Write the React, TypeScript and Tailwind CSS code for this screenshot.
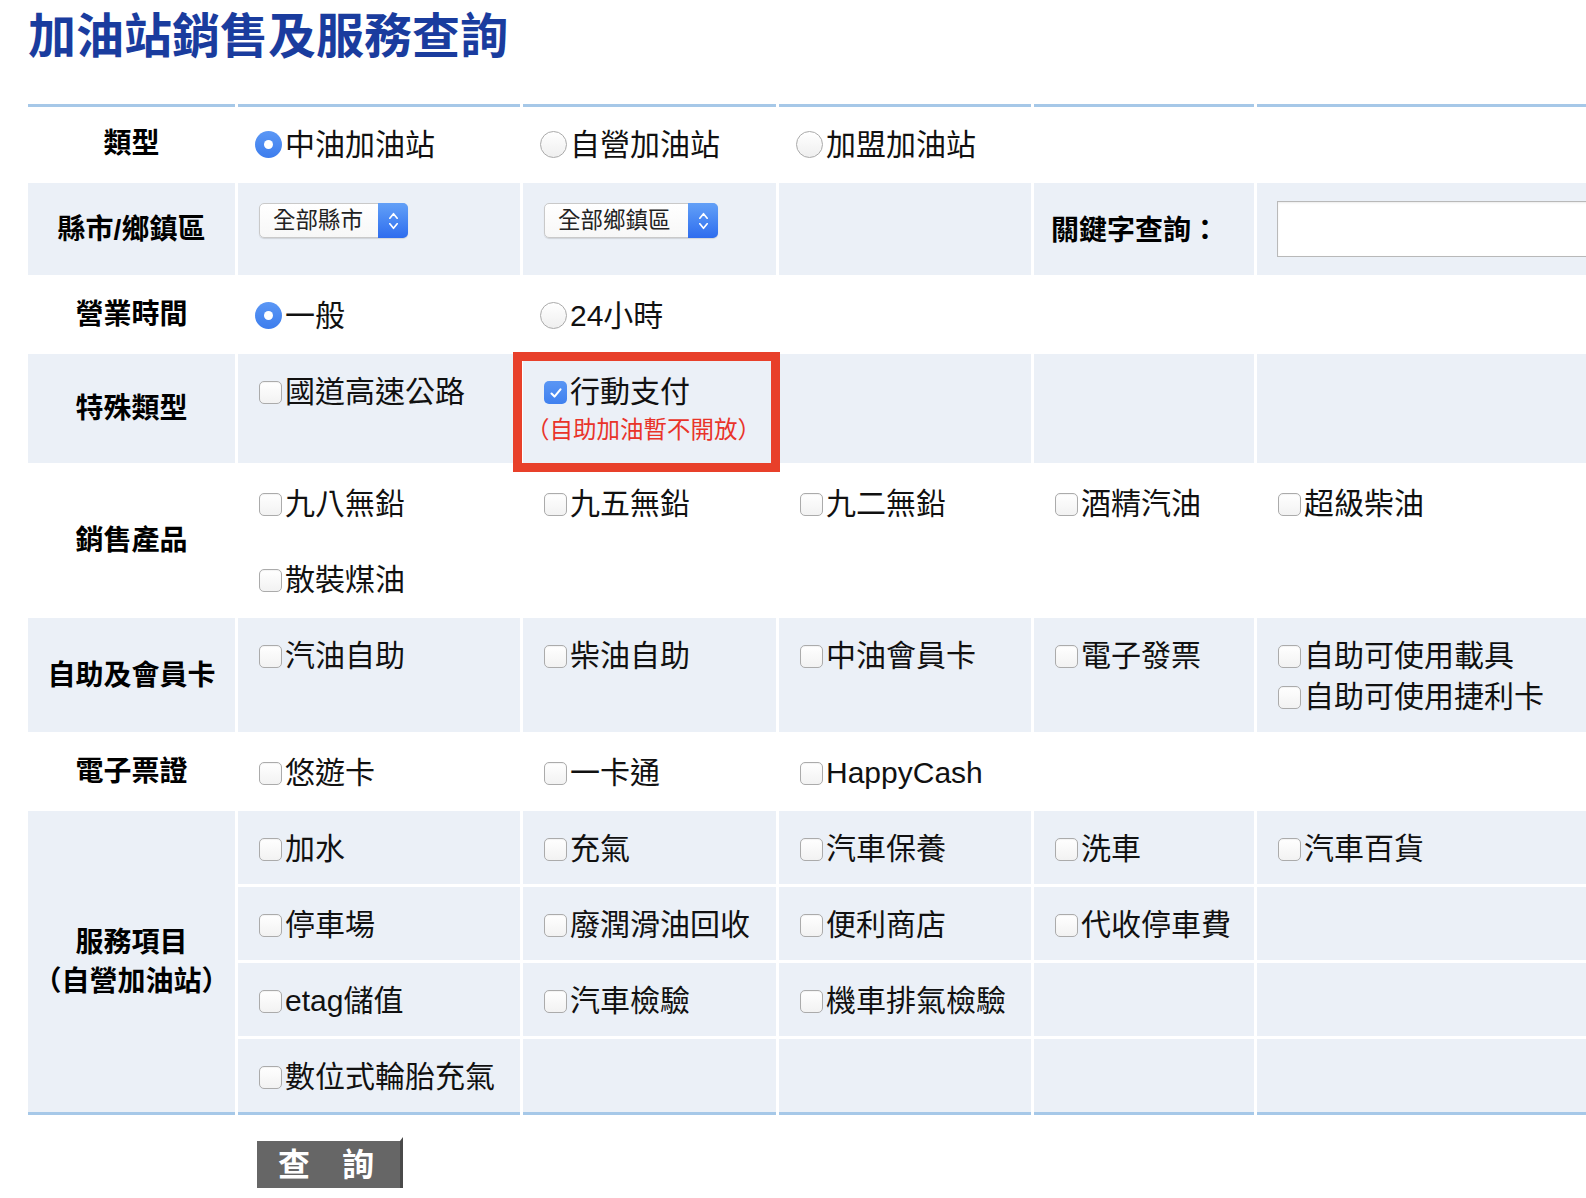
import React from "react";

// shared cell styles for the search form table
const label = "align-middle text-center font-bold text-[28px] leading-[39px] text-black";
const cell = "align-top pl-[21px] pt-[17px] pb-[15px] text-[30px] leading-[41px] text-[#111]";
const tint = "bg-[#ebf0f7]";
const topLine = "border-t-[3px] border-t-[#a6c8e8]";
const bottomLine = "border-b-[3px] border-b-[#a6c8e8]";

function Box({ checked = false }: { checked?: boolean }) {
  if (checked) {
    return (
      <span className="inline-flex size-[23px] shrink-0 translate-y-[1px] items-center justify-center rounded-[5px] bg-linear-to-b from-[#5a96f4] to-[#3f80ef]">
        <svg viewBox="0 0 16 16" className="size-[16px]">
          <path d="M3.5 8.6l3 3 6-7.2" fill="none" stroke="white" strokeWidth="2.1" strokeLinecap="round" strokeLinejoin="round" />
        </svg>
      </span>
    );
  }
  return (
    <span className="inline-block size-[23px] shrink-0 translate-y-[1px] rounded-[5px] border border-[#ababab] bg-linear-to-b from-white to-[#f2f2f2] shadow-[inset_0_1px_1px_rgba(0,0,0,0.05)]" />
  );
}

function Radio({ checked = false }: { checked?: boolean }) {
  if (checked) {
    return (
      <span className="-ml-[4px] inline-flex size-[27px] shrink-0 items-center justify-center rounded-full bg-linear-to-b from-[#5b97f5] to-[#3d7ded]">
        <span className="size-[9px] rounded-full bg-white" />
      </span>
    );
  }
  return (
    <span className="-ml-[4px] inline-block size-[27px] shrink-0 rounded-full border border-[#aaaaaa] bg-linear-to-b from-white to-[#efefef]" />
  );
}

function Option({ text, checked = false }: { text: string; checked?: boolean }) {
  return (
    <div className="flex items-center">
      <Box checked={checked} />
      <span className="ml-[3px] whitespace-nowrap">{text}</span>
    </div>
  );
}

function RadioOption({ text, checked = false }: { text: string; checked?: boolean }) {
  return (
    <div className="flex items-center">
      <Radio checked={checked} />
      <span className="ml-[3px] whitespace-nowrap">{text}</span>
    </div>
  );
}

function Select({ text, className }: { text: string; className: string }) {
  return (
    <div className={`flex h-[35px] items-stretch rounded-[5px] border border-[#c9c9c9] bg-linear-to-b from-white to-[#f7f7f7] shadow-[0_1px_1px_rgba(0,0,0,0.12)] ${className}`}>
      <span className="flex-1 whitespace-nowrap pl-[13px] text-[22.5px] leading-[33px] text-[#222]">{text}</span>
      <span className="-my-px -mr-px flex w-[30px] items-center justify-center rounded-r-[5px] bg-linear-to-b from-[#63a0f7] to-[#2e6cee]">
        <svg viewBox="0 0 12 24" className="h-[22px] w-[11px]">
          <path d="M2 9l4-5 4 5M2 15l4 5 4-5" fill="none" stroke="white" strokeWidth="1.8" strokeLinecap="round" strokeLinejoin="round" />
        </svg>
      </span>
    </div>
  );
}

export default function App() {
  return (
    <div className="w-full overflow-hidden bg-white pb-[12px] font-['Liberation_Sans','Noto_Sans_CJK_TC',sans-serif]">
      <h1 className="pl-[28px] pt-[8px] text-[48px] font-bold leading-[58px] text-[#1a3c9e]">加油站銷售及服務查詢</h1>

      <div className="mt-[35px] pl-[25px]">
        <table className="w-[1655px] table-fixed border-separate border-spacing-[3px]">
          <colgroup>
            <col className="w-[207px]" />
            <col className="w-[282px]" />
            <col className="w-[253px]" />
            <col className="w-[252px]" />
            <col className="w-[220px]" />
            <col className="w-[420px]" />
          </colgroup>
          <tbody>
            {/* 類型 */}
            <tr>
              <td className={`${label} ${topLine}`}>類型</td>
              <td className={`${cell} ${topLine}`}><RadioOption text="中油加油站" checked /></td>
              <td className={`${cell} ${topLine}`}><RadioOption text="自營加油站" /></td>
              <td className={`${cell} ${topLine}`}><RadioOption text="加盟加油站" /></td>
              <td className={`${cell} ${topLine}`} />
              <td className={`${cell} ${topLine}`} />
            </tr>

            {/* 縣市/鄉鎮區 + keyword */}
            <tr>
              <td className={`${label} ${tint}`}>縣市/鄉鎮區</td>
              <td className={`${tint} align-top pl-[21px] pt-[20px]`}><Select text="全部縣市" className="w-[149px]" /></td>
              <td className={`${tint} align-top pl-[21px] pt-[20px]`}><Select text="全部鄉鎮區" className="w-[174px]" /></td>
              <td className={tint} />
              <td className={`${tint} align-middle pl-[17px] pt-[4px] text-[28px] font-bold text-black whitespace-nowrap`}>關鍵字查詢：</td>
              <td className={`${tint} align-middle py-[18px] pl-[20px]`}>
                <input className="block h-[56px] w-[380px] border border-[#b9b9b9] bg-white px-2 text-[24px] shadow-[inset_0_1px_2px_rgba(0,0,0,0.08)] outline-none" />
              </td>
            </tr>

            {/* 營業時間 */}
            <tr>
              <td className={label}>營業時間</td>
              <td className={cell}><RadioOption text="一般" checked /></td>
              <td className={cell}><RadioOption text="24小時" /></td>
              <td className={cell} />
              <td className={cell} />
              <td className={cell} />
            </tr>

            {/* 特殊類型 */}
            <tr>
              <td className={`${label} ${tint}`}>特殊類型</td>
              <td className={`${cell} ${tint}`}><Option text="國道高速公路" /></td>
              <td className={`${cell} ${tint} relative`}>
                <Option text="行動支付" checked />
                <div className="-ml-[18px] whitespace-nowrap text-[23.5px] leading-[36px] text-[#e9342a]">（自助加油暫不開放）</div>
                <div className="pointer-events-none absolute -left-[10px] -top-[2px] z-10 h-[120px] w-[267px] border-[9px] border-[#e8402a]" />
              </td>
              <td className={`${cell} ${tint}`} />
              <td className={`${cell} ${tint}`} />
              <td className={`${cell} ${tint}`} />
            </tr>

            {/* 銷售產品 */}
            <tr>
              <td rowSpan={2} className={label}>銷售產品</td>
              <td className={cell}><Option text="九八無鉛" /></td>
              <td className={cell}><Option text="九五無鉛" /></td>
              <td className={cell}><Option text="九二無鉛" /></td>
              <td className={cell}><Option text="酒精汽油" /></td>
              <td className={cell}><Option text="超級柴油" /></td>
            </tr>
            <tr>
              <td className={cell}><Option text="散裝煤油" /></td>
              <td className={cell} />
              <td className={cell} />
              <td className={cell} />
              <td className={cell} />
            </tr>

            {/* 自助及會員卡 */}
            <tr>
              <td className={`${label} ${tint}`}>自助及會員卡</td>
              <td className={`${cell} ${tint}`}><Option text="汽油自助" /></td>
              <td className={`${cell} ${tint}`}><Option text="柴油自助" /></td>
              <td className={`${cell} ${tint}`}><Option text="中油會員卡" /></td>
              <td className={`${cell} ${tint}`}><Option text="電子發票" /></td>
              <td className={`${cell} ${tint}`}>
                <Option text="自助可使用載具" />
                <Option text="自助可使用捷利卡" />
              </td>
            </tr>

            {/* 電子票證 */}
            <tr>
              <td className={label}>電子票證</td>
              <td className={cell}><Option text="悠遊卡" /></td>
              <td className={cell}><Option text="一卡通" /></td>
              <td className={cell}><Option text="HappyCash" /></td>
              <td className={cell} />
              <td className={cell} />
            </tr>

            {/* 服務項目 */}
            <tr>
              <td rowSpan={4} className={`${label} ${tint} ${bottomLine}`}>
                服務項目
                <br />
                （自營加油站）
              </td>
              <td className={`${cell} ${tint}`}><Option text="加水" /></td>
              <td className={`${cell} ${tint}`}><Option text="充氣" /></td>
              <td className={`${cell} ${tint}`}><Option text="汽車保養" /></td>
              <td className={`${cell} ${tint}`}><Option text="洗車" /></td>
              <td className={`${cell} ${tint}`}><Option text="汽車百貨" /></td>
            </tr>
            <tr>
              <td className={`${cell} ${tint}`}><Option text="停車場" /></td>
              <td className={`${cell} ${tint}`}><Option text="廢潤滑油回收" /></td>
              <td className={`${cell} ${tint}`}><Option text="便利商店" /></td>
              <td className={`${cell} ${tint}`}><Option text="代收停車費" /></td>
              <td className={`${cell} ${tint}`} />
            </tr>
            <tr>
              <td className={`${cell} ${tint}`}><Option text="etag儲值" /></td>
              <td className={`${cell} ${tint}`}><Option text="汽車檢驗" /></td>
              <td className={`${cell} ${tint}`}><Option text="機車排氣檢驗" /></td>
              <td className={`${cell} ${tint}`} />
              <td className={`${cell} ${tint}`} />
            </tr>
            <tr>
              <td className={`${cell} ${tint} ${bottomLine}`}><Option text="數位式輪胎充氣" /></td>
              <td className={`${cell} ${tint} ${bottomLine}`} />
              <td className={`${cell} ${tint} ${bottomLine}`} />
              <td className={`${cell} ${tint} ${bottomLine}`} />
              <td className={`${cell} ${tint} ${bottomLine}`} />
            </tr>

            {/* submit */}
            <tr>
              <td />
              <td className="pl-[19px] pt-[19px]">
                <button className="block h-[51px] w-[146px] border-r-[3px] border-t-[4px] border-r-[#4a4a4a] border-t-white bg-[#666] pl-[21px] text-left text-[32px] font-bold leading-[44px] text-white">
                  查　詢
                </button>
              </td>
            </tr>
          </tbody>
        </table>
      </div>
    </div>
  );
}
